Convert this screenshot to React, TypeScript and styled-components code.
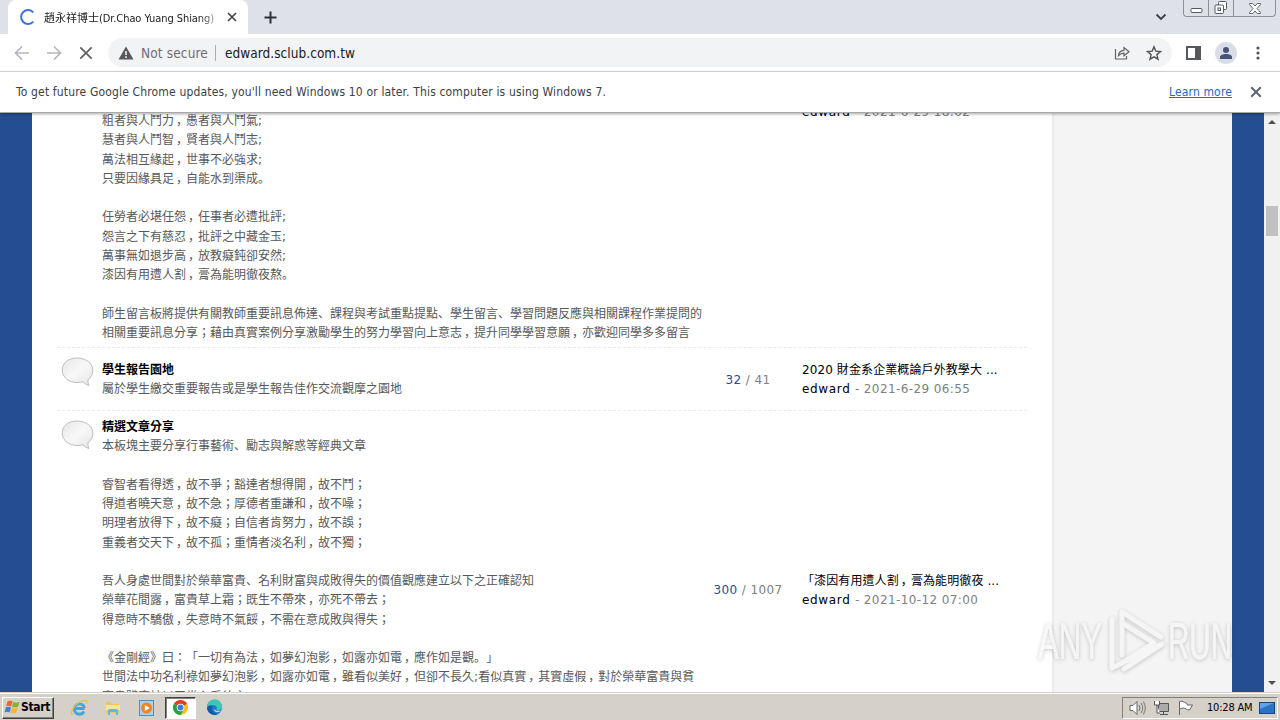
import React from "react"
import styled, { createGlobalStyle } from "styled-components"

let Font = {
  ui: `"DejaVu Sans Condensed", "DejaVu Sans", "Noto Sans CJK TC", sans-serif`,
  page: `"DejaVu Sans", "Noto Sans CJK TC", sans-serif`,
}

let Color = {
  strip: "#dee1e8",
  icon: "#5f6368",
  text: "#3c4043",
  blue: "#254e92",
  body: "#585858",
  muted: "#808080",
  taskbar: "#d5d0c8",
}

let GlobalStyle = createGlobalStyle`
  body {
    margin: 0;
    overflow: hidden;
    background: #fff;
  }

  svg {
    display: block;
    flex: none;
  }
`

let Screen = styled.div`
  width: 1280px;
  height: 720px;
  display: flex;
  flex-direction: column;
  overflow: hidden;
  position: relative;
  font-family: ${Font.ui};
`

let Label = styled.span<{ $size?: number; $color?: string; $spacing?: number }>`
  font-size: ${(p) => p.$size ?? 12}px;
  color: ${(p) => p.$color ?? Color.text};
  letter-spacing: ${(p) => p.$spacing ?? 0}px;
  white-space: nowrap;
`

let TabStrip = styled.div`
  display: flex;
  height: 34px;
  background: ${Color.strip};
`

let Tab = styled.div`
  display: flex;
  align-items: center;
  box-sizing: border-box;
  width: 240px;
  margin-left: 8px;
  padding: 0 11px 0 12px;
  background: #fff;
  border-radius: 8px 8px 0 0;
`

let TabTitle = styled.div`
  width: 174px;
  margin: 0 auto 1px 8px;
  font-size: 11px;
  color: #202124;
  white-space: nowrap;
  mask-image: linear-gradient(to right, #000 155px, rgba(0, 0, 0, 0.4) 172px);

  span {
    letter-spacing: -0.08px;
  }
`

let NewTab = styled.div`
  display: flex;
  align-items: center;
  margin-left: 16px;
`

let StripRight = styled.div`
  display: flex;
  margin-left: auto;
  padding-right: 4px;
`

let TabSearch = styled.div`
  display: flex;
  align-items: center;
  margin-right: 16px;
`

let WindowButtons = styled.div`
  display: flex;
  box-sizing: border-box;
  width: 93px;
  height: 17px;
  border: 1px solid #8d919b;
  border-top: 0;
  border-radius: 0 0 4px 4px;
`

let WindowButton = styled.div<{ $width: number }>`
  display: flex;
  align-items: center;
  justify-content: center;
  box-sizing: border-box;
  width: ${(p) => p.$width}px;

  & + & {
    border-left: 1px solid #8d919b;
  }
`

let Toolbar = styled.div`
  display: flex;
  align-items: center;
  box-sizing: border-box;
  height: 38px;
  padding: 0 14px;
  background: #fff;
  border-bottom: 1px solid #dadce0;
`

let NavButtons = styled.div`
  display: flex;
  gap: 16px;
  margin-right: 14px;
`

let AddressBar = styled.div`
  display: flex;
  align-items: center;
  box-sizing: border-box;
  flex: 1;
  height: 29px;
  padding: 0 10px;
  background: #f1f3f5;
  border-radius: 15px;
`

let SecurityLabel = styled(Label)`
  margin-left: 7px;
`

let Separator = styled.div`
  width: 1px;
  height: 16px;
  margin: 0 9px 0 7px;
  background: #a9adb2;
`

let AddressIcons = styled.div`
  display: flex;
  gap: 16px;
  margin-left: auto;
`

let ToolbarIcons = styled.div`
  display: flex;
  align-items: center;
  margin-left: 14px;
`

let Avatar = styled.div`
  display: flex;
  align-items: center;
  justify-content: center;
  width: 22px;
  height: 22px;
  margin: 0 13px 0 14px;
  background: #d9dde6;
  border-radius: 50%;
`

let InfoBar = styled.div`
  display: flex;
  align-items: center;
  box-sizing: border-box;
  height: 41px;
  padding: 0 18px 1px 16px;
  background: #fff;
  border-bottom: 1px solid #a8a8a8;
  box-shadow: 0 1px 3px rgba(0, 0, 0, 0.35);
  z-index: 1;
`

let LearnMore = styled(Label)`
  margin-left: auto;
  margin-right: 18px;
  text-decoration: underline;
`

let Viewport = styled.div`
  display: flex;
  height: 579px;
  overflow: hidden;
  background: ${Color.blue};
`

let Forum = styled.div`
  box-sizing: border-box;
  width: 1020px;
  margin-left: 32px;
  padding: 0 25px;
  background: #fff;
`

let Sidebar = styled.div`
  box-sizing: border-box;
  width: 180px;
  margin-right: 32px;
  background: #f4f4f4;
  border-left: 2px solid #ebebeb;
`

let Row = styled.div<{ $height: number; $padTop: number }>`
  display: grid;
  grid-template-columns: 45px 611px 70px 225px;
  box-sizing: border-box;
  height: ${(p) => p.$height}px;
  padding-top: ${(p) => p.$padTop}px;
  border-bottom: 1px dashed #ececec;
`

// The top of this row is scrolled out of view
let FirstRow = styled(Row)`
  margin-top: -2px;
`

let BubbleCell = styled.div<{ $top: number }>`
  padding-left: 4px;
  margin-top: ${(p) => p.$top}px;
`

let Description = styled.div`
  font-family: ${Font.page};
  font-size: 12px;
  line-height: 19.25px;
  color: ${Color.body};
  white-space: nowrap;
  text-spacing-trim: space-all;
`

let Line = styled.div`
  height: 19.25px;
`

// Stops and commas sit low in their cell
let Stop = styled.span<{ $shift?: boolean }>`
  font-family: "Noto Sans CJK JP", sans-serif;
  line-height: 1;
  ${(p) => p.$shift && "margin: 0 -2px 0 2px;"}
`

let Title = styled(Line)`
  font-weight: bold;
  color: #000;
`

let Count = styled.div<{ $top: number }>`
  margin-top: ${(p) => p.$top}px;
  font-family: ${Font.page};
  font-size: 12px;
  line-height: 19.2px;
  letter-spacing: 0.4px;
  text-align: center;
  white-space: nowrap;
  color: ${Color.muted};

  b {
    font-weight: normal;
    color: ${Color.blue};
  }
`

let LastPost = styled.div<{ $top: number }>`
  margin-top: ${(p) => p.$top}px;
  padding-left: 19px;
  font-family: ${Font.page};
  font-size: 12px;
  line-height: 19.2px;
  white-space: nowrap;
  letter-spacing: 0.1px;
  color: #000;
`

let Author = styled.span`
  letter-spacing: 0.65px;
`

let PostDate = styled.span`
  letter-spacing: 0.4px;
  color: ${Color.muted};
`

let ScrollBar = styled.div`
  display: flex;
  flex-direction: column;
  align-items: center;
  justify-content: space-between;
  box-sizing: border-box;
  width: 16px;
  padding: 7px 0 7px;
  background: #f1f1f1;
`

let Thumb = styled.div`
  width: 12px;
  height: 30px;
  margin: 82px 0 auto;
  background: #c1c1c1;
`

let Watermark = styled.div`
  position: absolute;
  left: 1030px;
  top: 600px;
`

let TaskBar = styled.div`
  display: flex;
  align-items: center;
  box-sizing: border-box;
  height: 28px;
  padding: 2px 2px 0;
  background: ${Color.taskbar};
  border-top: 1px solid #d5d0c8;
  box-shadow: inset 0 1px 0 #fff;
`

let StartButton = styled.div`
  display: flex;
  align-items: center;
  box-sizing: border-box;
  width: 52px;
  height: 22px;
  padding: 0 0 2px 1px;
  border: 1px solid;
  border-color: #fff #404040 #404040 #fff;
  box-shadow: inset -1px -1px 0 #808080;
  font-size: 12px;
  font-weight: bold;
  letter-spacing: -0.3px;
  color: #000;
`

let TaskButton = styled.div<{ $active?: boolean }>`
  display: flex;
  align-items: center;
  justify-content: center;
  box-sizing: border-box;
  width: 31px;
  height: 22px;
  margin-right: 3px;
  border: 1px solid transparent;
  ${(p) =>
    p.$active &&
    `
    background: #fff;
    border-color: #404040 #fff #fff #404040;
    box-shadow: inset 1px 1px 0 #808080;
  `}
`

let TaskButtons = styled.div`
  display: flex;
  margin-left: 9px;
`

let Tray = styled.div`
  display: flex;
  align-items: center;
  box-sizing: border-box;
  width: 156px;
  height: 22px;
  margin-left: auto;
  padding-left: 6px;
  gap: 7px;
  border: 1px solid;
  border-color: #808080 #fff #fff #808080;
`

let Clock = styled(Label)`
  margin-left: 6px;
`

function Cross(props: { size: number; color?: string; weight?: number }) {
  return (
    <svg width={props.size} height={props.size} viewBox="0 0 10 10">
      <path
        d="M1 1l8 8M9 1l-8 8"
        stroke={props.color ?? Color.text}
        strokeWidth={props.weight ?? 1.6}
      />
    </svg>
  )
}

function Arrow(props: { flip?: boolean }) {
  return (
    <svg width="16" height="16" viewBox="0 0 16 16">
      <path
        d={props.flip ? "M1 8h13M8 1.5L14.5 8 8 14.5" : "M15 8H2M8 1.5L1.5 8 8 14.5"}
        fill="none"
        stroke="#b4b7bb"
        strokeWidth="1.7"
      />
    </svg>
  )
}

function Bubble() {
  return (
    <svg width="33" height="30" viewBox="0 0 33 30">
      <defs>
        <linearGradient id="bubble" x1="0" y1="0" x2="1" y2="1">
          <stop offset="0" stopColor="#e6e6e6" />
          <stop offset="0.5" stopColor="#f8f8f8" />
          <stop offset="1" stopColor="#e4e4e4" />
        </linearGradient>
      </defs>
      <path
        d="M16 1C7.500 1 1.200 6 1.200 13s6.500 12.500 15 12.500c2.200 0 4-.3 5.600-.8 1.700 1.800 3.700 3 6.200 3.800-.9-1.900-1.200-3.800-1-5.800 3.200-2.300 4.800-5.700 4.800-9.700C31.800 6 24.500 1 16 1z"
        fill="url(#bubble)"
        stroke="#bdbdbd"
      />
    </svg>
  )
}

function WatermarkLogo() {
  return (
    <svg width="216" height="80" viewBox="0 0 216 80">
      <defs>
        <filter id="soft" x="-10%" y="-10%" width="120%" height="120%">
          <feDropShadow dx="0" dy="1" stdDeviation="2" floodColor="#000" floodOpacity="0.3" />
        </filter>
      </defs>
      <g
        filter="url(#soft)"
        opacity="0.75"
        fill="#f6f6f6"
        fontFamily="Liberation Sans Narrow, Liberation Sans, sans-serif"
        fontSize="52"
      >
        <text x="8" y="59" textLength="64" lengthAdjust="spacingAndGlyphs">
          ANY
        </text>
        <text x="138" y="59" textLength="64" lengthAdjust="spacingAndGlyphs">
          RUN
        </text>
        <g fill="none" stroke="#f6f6f6" strokeWidth="4.500" strokeLinecap="round" strokeLinejoin="round">
          <path d="M92 55V12l39 25" />
          <path d="M82 19v49l50-24-38 25" />
          <path d="M92 23l32 20-32 20" />
        </g>
      </g>
    </svg>
  )
}

function WindowsFlag() {
  return (
    <svg width="17" height="16" viewBox="0 0 17 16">
      <path d="M3.500 2.500Q6 1 8.500 2.500L7.200 7.500Q5 6 2.200 7.200z" fill="#e8672c" />
      <path d="M9.300 3Q12 4.500 15.500 2.800L14 7.700Q11 9 8 7.700z" fill="#7fb42c" />
      <path d="M2 8.200Q4.800 7 7 8.500L5.600 13.500Q3.300 12 .6 13.200z" fill="#3f7fd0" />
      <path d="M7.800 8.800Q11 10 13.700 8.700L12.200 13.700Q9.500 15 6.500 13.700z" fill="#f4b92a" />
    </svg>
  )
}

function ExplorerE() {
  return (
    <svg width="18" height="18" viewBox="0 0 18 18">
      <path
        d="M14.500 9.500H5M14 12.500A5.200 5.200 0 1 1 14.500 9"
        fill="none"
        stroke="#41a5df"
        strokeWidth="2.800"
      />
      <path
        d="M2.500 16C-.5 14 4 6.500 9 3.500s9-3 7.500 1"
        fill="none"
        stroke="#e7bf45"
        strokeWidth="1.300"
      />
    </svg>
  )
}

function FolderIcon() {
  return (
    <svg width="18" height="18" viewBox="0 0 18 18">
      <path d="M2 3h5l1 2h7v9H2z" fill="#e9c75c" />
      <path d="M2 6h14v5H2z" fill="#f8e59c" />
      <path d="M4 16v-4q0-2 2-2h6q2 0 2 2v4h-2v-3H6v3z" fill="#63b7dd" />
    </svg>
  )
}

function MediaIcon() {
  return (
    <svg width="18" height="18" viewBox="0 0 18 18">
      <rect x="1.500" y="1.500" width="14" height="15" fill="#a9d0ee" stroke="#4a90cd" />
      <circle cx="8.500" cy="9" r="5.500" fill="#f08420" />
      <path d="M6.800 6v6l5-3z" fill="#fff" />
    </svg>
  )
}

function ChromeIcon() {
  return (
    <svg width="17" height="17" viewBox="0 0 18 18">
      <circle cx="9" cy="9" r="8" fill="#fbc116" />
      <path d="M9 9L2.100 5A8 8 0 0 1 15.900 5z" fill="#e33b2e" />
      <path d="M9 9L2.100 5A8 8 0 0 0 9 17l3.500-6z" fill="#27a14b" />
      <circle cx="9" cy="9" r="4" fill="#fff" />
      <circle cx="9" cy="9" r="3.100" fill="#3e7de8" />
    </svg>
  )
}

function EdgeIcon() {
  return (
    <svg width="17" height="17" viewBox="0 0 18 18">
      <circle cx="9" cy="9" r="8" fill="#1878c9" />
      <path d="M1 8.500A8 8 0 0 1 17 8c.5 3.500-3 4.500-6 3.500 1.500-3-1-5-4-4.800S2 7.500 1 8.500z" fill="#40c5b5" />
      <path d="M7 8c-2 3 0 7 5 8.300A8 8 0 0 1 1.200 10C2 7 5 6 7 8z" fill="#1559a6" />
      <path d="M8 9q0 4 8 3.500-2 1.800-4.500 1.500Q8 13.500 8 9z" fill="#d5d0c8" />
    </svg>
  )
}

let introLines = [
  "粗者與人鬥力，愚者與人鬥氣;",
  "慧者與人鬥智，賢者與人鬥志;",
  "萬法相互緣起，世事不必強求;",
  "只要因緣具足，自能水到渠成。",
  "",
  "任勞者必堪任怨，任事者必遭批評;",
  "怨言之下有慈忍，批評之中藏金玉;",
  "萬事無如退步高，放教癡鈍卻安然;",
  "漆因有用遭人割，膏為能明徹夜熬。",
  "",
  "師生留言板將提供有關教師重要訊息佈達、課程與考試重點提點、學生留言、學習問題反應與相關課程作業提問的",
  "相關重要訊息分享；藉由真實案例分享激勵學生的努力學習向上意志，提升同學學習意願，亦歡迎同學多多留言",
]

let articleLines = [
  "本板塊主要分享行事藝術、勵志與解惑等經典文章",
  "",
  "睿智者看得透，故不爭；豁達者想得開，故不鬥；",
  "得道者曉天意，故不急；厚德者重謙和，故不噪；",
  "明理者放得下，故不癡；自信者肯努力，故不誤；",
  "重義者交天下，故不孤；重情者淡名利，故不獨；",
  "",
  "吾人身處世間對於榮華富貴、名利財富與成敗得失的價值觀應建立以下之正確認知",
  "榮華花間露，富貴草上霜；既生不帶來，亦死不帶去；",
  "得意時不驕傲，失意時不氣餒，不需在意成敗與得失；",
  "",
  "《金剛經》曰：「一切有為法，如夢幻泡影，如露亦如電，應作如是觀。」",
  "世間法中功名利祿如夢幻泡影，如露亦如電，雖看似美好，但卻不長久;看似真實，其實虛假，對於榮華富貴與貧",
  "窮貴賤應該以平常心看待之",
]

function Punctuated(props: { text: string }) {
  return (
    <>
      {props.text.split(/([。、，])/).map((part, i) => {
        if (i % 2 === 0) {
          return part
        }
        return (
          <Stop key={i} $shift={part === "，"}>
            {part}
          </Stop>
        )
      })}
    </>
  )
}

function Lines(props: { lines: string[] }) {
  return (
    <>
      {props.lines.map((line, i) => (
        <Line key={i}>
          <Punctuated text={line} />
        </Line>
      ))}
    </>
  )
}

function BrowserChrome() {
  return (
    <>
      <TabStrip>
        <Tab>
          <svg width="16" height="16" viewBox="0 0 16 16">
            <path
              d="M13.300 3.300A7 7 0 1 0 13.300 12.700"
              fill="none"
              stroke="#3b74d6"
              strokeWidth="2"
            />
          </svg>
          <TabTitle>
            趙永祥博士<span>(Dr.Chao Yuang Shiang)</span>
          </TabTitle>
          <Cross size={10} />
        </Tab>
        <NewTab>
          <svg width="13" height="13" viewBox="0 0 13 13">
            <path d="M6.500 .5v12M.5 6.500h12" stroke="#2f3237" strokeWidth="2" />
          </svg>
        </NewTab>
        <StripRight>
          <TabSearch>
            <svg width="12" height="8" viewBox="0 0 12 8">
              <path d="M1.500 1.500L6 6l4.500-4.500" fill="none" stroke="#3c4043" strokeWidth="1.800" />
            </svg>
          </TabSearch>
          <WindowButtons>
            <WindowButton $width={24}>
              <svg width="13" height="15" viewBox="0 0 13 15">
                <rect x="1" y="7.500" width="11" height="4" rx="1" fill="#fff" stroke="#555b66" />
              </svg>
            </WindowButton>
            <WindowButton $width={25}>
              <svg width="14" height="14" viewBox="0 0 14 14">
                <rect x="4.500" y=".5" width="8" height="8" rx="1" fill="#fff" stroke="#555b66" />
                <rect x="1" y="4" width="8.500" height="8.500" rx="1" fill="#fff" stroke="#555b66" />
                <rect x="4" y="7" width="2.500" height="2.500" fill="none" stroke="#555b66" />
              </svg>
            </WindowButton>
            <WindowButton $width={42}>
              <svg width="12" height="11" viewBox="0 0 12 11">
                <path
                  d="M.5 .5h3.300L6 3 8.200 .5h3.300v1L8 5.500l3.500 4v1H8.200L6 8l-2.200 2.500H.5v-1L4 5.500.5 1.500z"
                  fill="#fff"
                  stroke="#555b66"
                  strokeWidth=".9"
                />
              </svg>
            </WindowButton>
          </WindowButtons>
        </StripRight>
      </TabStrip>
      <Toolbar>
        <NavButtons>
          <Arrow />
          <Arrow flip />
          <svg width="16" height="16" viewBox="0 0 16 16">
            <path d="M2.300 2.300l11.400 11.400M13.700 2.300L2.300 13.700" stroke="#5f6368" strokeWidth="1.800" />
          </svg>
        </NavButtons>
        <AddressBar>
          <svg width="16" height="14" viewBox="0 0 16 14">
            <path d="M8 .5L15.500 13.500H.5z" fill="#55585d" />
            <path d="M8 5v4M8 10.300v1.600" stroke="#f1f3f5" strokeWidth="1.600" />
          </svg>
          <SecurityLabel $size={13.5} $color="#6b6f74" $spacing={0.15}>
            Not secure
          </SecurityLabel>
          <Separator />
          <Label $size={13.5} $color="#202124" $spacing={0.05}>
            edward.sclub.com.tw
          </Label>
          <AddressIcons>
            <svg width="16" height="16" viewBox="0 0 16 16">
              <path
                d="M1.500 4v10h11v-3M4.500 10.500c.3-3.500 2.500-5 5.500-5.200V2.500l5 4.200-5 4V8.200c-2.500 0-4 .6-5.500 2.300z"
                fill="none"
                stroke={Color.icon}
                strokeWidth="1.200"
              />
            </svg>
            <svg width="16" height="16" viewBox="0 0 16 16">
              <path
                d="M8 1.800l1.800 4.300 4.700.4-3.600 3.100 1.100 4.600L8 11.800l-4 2.400 1.100-4.600L1.500 6.500l4.700-.4z"
                fill="none"
                stroke="#505459"
                strokeWidth="1.400"
              />
            </svg>
          </AddressIcons>
        </AddressBar>
        <ToolbarIcons>
          <svg width="15" height="14" viewBox="0 0 15 14">
            <path d="M0 0h15v14H0zM2 2v10h7V2z" fill="#55585d" fillRule="evenodd" />
          </svg>
          <Avatar>
            <svg width="12" height="12" viewBox="0 0 12 12">
              <circle cx="6" cy="3" r="3" fill="#485478" />
              <path d="M0 12v-2c0-2 3-3 6-3s6 1 6 3v2z" fill="#485478" />
            </svg>
          </Avatar>
          <svg width="16" height="14" viewBox="0 0 16 14">
            <circle cx="8" cy="2" r="1.600" fill="#505459" />
            <circle cx="8" cy="7" r="1.600" fill="#505459" />
            <circle cx="8" cy="12" r="1.600" fill="#505459" />
          </svg>
        </ToolbarIcons>
      </Toolbar>
      <InfoBar>
        <Label $spacing={0.16}>
          To get future Google Chrome updates, you'll need Windows 10 or later. This computer is
          using Windows 7.
        </Label>
        <LearnMore $color="#2468c8" $spacing={0.15}>
          Learn more
        </LearnMore>
        <Cross size={12} color={Color.icon} />
      </InfoBar>
    </>
  )
}

function Page() {
  return (
    <Viewport>
      <Forum>
        <FirstRow $height={237} $padTop={1}>
          <div />
          <Description>
            <Lines lines={introLines} />
          </Description>
          <div />
          <LastPost $top={-9}>
            <Author>edward </Author>
            <PostDate>- 2021-6-29 18:02</PostDate>
          </LastPost>
        </FirstRow>
        <Row $height={63} $padTop={13}>
          <BubbleCell $top={-4}>
            <Bubble />
          </BubbleCell>
          <Description>
            <Title>學生報告園地</Title>
            <Line>屬於學生繳交重要報告或是學生報告佳作交流觀摩之園地</Line>
          </Description>
          <Count $top={10}>
            <b>32</b> / 41
          </Count>
          <LastPost $top={0}>
            2020 財金系企業概論戶外教學大 ...
            <br />
            <Author>edward </Author>
            <PostDate>- 2021-6-29 06:55</PostDate>
          </LastPost>
        </Row>
        <Row $height={330} $padTop={7}>
          <BubbleCell $top={2}>
            <Bubble />
          </BubbleCell>
          <Description>
            <Title>精選文章分享</Title>
            <Lines lines={articleLines} />
          </Description>
          <Count $top={163}>
            <b>300</b> / 1007
          </Count>
          <LastPost $top={154}>
            <Punctuated text="「漆因有用遭人割，膏為能明徹夜 ..." />
            <br />
            <Author>edward </Author>
            <PostDate>- 2021-10-12 07:00</PostDate>
          </LastPost>
        </Row>
      </Forum>
      <Sidebar />
      <ScrollBar>
        <svg width="8" height="4" viewBox="0 0 8 4">
          <path d="M0 4l4-4 4 4z" fill="#505050" />
        </svg>
        <Thumb />
        <svg width="8" height="4" viewBox="0 0 8 4">
          <path d="M0 0l4 4 4-4z" fill="#505050" />
        </svg>
      </ScrollBar>
    </Viewport>
  )
}

function WindowsTaskBar() {
  return (
    <TaskBar>
      <StartButton>
        <WindowsFlag />
        Start
      </StartButton>
      <TaskButtons>
        <TaskButton>
          <ExplorerE />
        </TaskButton>
        <TaskButton>
          <FolderIcon />
        </TaskButton>
        <TaskButton>
          <MediaIcon />
        </TaskButton>
        <TaskButton $active>
          <ChromeIcon />
        </TaskButton>
        <TaskButton>
          <EdgeIcon />
        </TaskButton>
      </TaskButtons>
      <Tray>
        <svg width="17" height="16" viewBox="0 0 17 16">
          <path d="M1 5.500h3l4-4v13l-4-4H1z" fill="#fff" stroke="#666" />
          <path d="M10 5q2 3 0 6M12 3q3.500 5 0 10M14.300 1.500q4 6.500 0 13" fill="none" stroke="#777" />
        </svg>
        <svg width="17" height="16" viewBox="0 0 17 16">
          <path d="M5.500 3.500h10v8h-10zM7 14.500h8M10.500 12v2" fill="#aaa" stroke="#555" />
          <path d="M1.500 1v4h5V1M4 5v8h3" fill="#fff" stroke="#555" />
        </svg>
        <svg width="17" height="16" viewBox="0 0 17 16">
          <path d="M2.500 15V1.500c3-1 4 1 7 1.500l1 2h5l-3 5c-3 0-4-2-6-2-1.500 0-2.500.5-4 1" fill="#fff" stroke="#666" />
        </svg>
        <Clock $color="#000" $size={11} $spacing={-0.2}>
          10:28 AM
        </Clock>
        <svg width="16" height="16" viewBox="0 0 16 16">
          <rect x=".5" y="2.500" width="15" height="11" fill="#2a73c4" stroke="#16457f" />
          <path d="M1 3h14L1 9z" fill="#5ea4e4" />
        </svg>
      </Tray>
    </TaskBar>
  )
}

export default function App() {
  return (
    <Screen>
      <GlobalStyle />
      <BrowserChrome />
      <Page />
      <WindowsTaskBar />
      <Watermark>
        <WatermarkLogo />
      </Watermark>
    </Screen>
  )
}
